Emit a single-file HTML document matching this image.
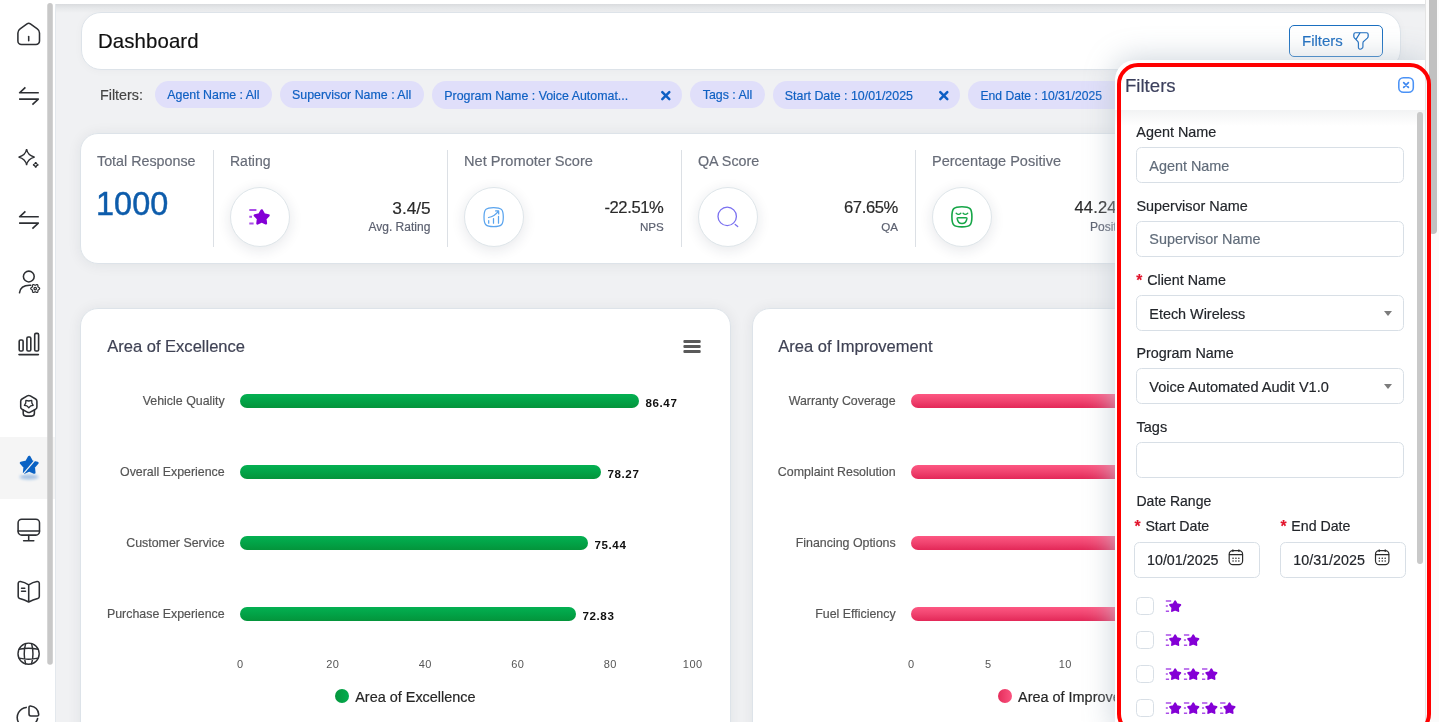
<!DOCTYPE html>
<html>
<head>
<meta charset="utf-8">
<title>Dashboard</title>
<style>
*{box-sizing:border-box;margin:0;padding:0}
html,body{width:1439px;height:722px;overflow:hidden;background:#fff;font-family:"Liberation Sans",sans-serif;}
body{position:relative}
.abs{position:absolute}
.t{position:absolute;white-space:nowrap}
.t,.ct,.st,.val,.sub,.cat,.lg,.lb,.it,h2{-webkit-text-stroke:.18px currentColor}
#side{position:absolute;left:0;top:0;width:56px;height:722px;background:#fff}
#side .active{position:absolute;left:0;top:437px;width:56px;height:62px;background:#f5f5f5}
#side .edge{position:absolute;left:55px;top:4px;width:1px;height:718px;background:#e3e8ed}
#sicons{position:absolute;left:0;top:0;width:56px;height:722px;fill:none;stroke:#2d2f33;stroke-width:1.55;stroke-linecap:round;stroke-linejoin:round}
#main{position:absolute;left:56px;top:4px;width:1369px;height:718px;background:#f0f1f3;overflow:hidden}
#main .topshadow{position:absolute;left:0;top:0;width:100%;height:9px;background:linear-gradient(#d9dbde,#e6e8ea 45%,#f0f1f3)}
.card{position:absolute;background:#fff;border:1px solid #dde3e9;border-radius:18px;box-shadow:0 1px 14px rgba(25,35,50,.075)}
#pg{transform:translateZ(0);position:absolute;left:-56px;top:-4px;width:1439px;height:722px}
#hdr{left:81px;top:12px;width:1319.5px;height:58px;border-radius:20px;box-shadow:0 1px 8px rgba(25,35,50,.03)}
#fbtn{position:absolute;left:1289px;top:25px;width:94px;height:32px;border:1.2px solid #1a6fc0;border-radius:5px;background:#fff}
.c20{line-height:20px}
.chip{position:absolute;top:81px;height:27px;border-radius:14px;background:#e0dffa}
.chip.x{height:28px}
.ct{position:absolute;white-space:nowrap;top:84.5px;line-height:20px;font-size:12.4px;color:#0f60c3}
#stats{left:80px;top:133px;width:1330px;height:131px}
.st{position:absolute;white-space:nowrap;top:150.8px;line-height:20px;font-size:14.3px;color:#676c78}
.div{position:absolute;top:150px;width:1px;height:97px;background:#dce0e5}
.circ{position:absolute;top:187px;width:60px;height:60px;border-radius:50%;border:1px solid #dfe6ea;background:#fff;box-shadow:0 3px 14px rgba(30,40,60,.11)}
.val{position:absolute;white-space:nowrap;top:198.1px;line-height:20px;font-size:16.6px;color:#2a2a2a;letter-spacing:-.4px}
.sub{position:absolute;white-space:nowrap;top:217px;line-height:20px;font-size:12px;color:#5c6170}
.chart h2{position:absolute;left:26.2px;top:27px;font-size:16.55px;font-weight:400;line-height:22px;color:#3f4254;white-space:nowrap}
.cat{position:absolute;white-space:nowrap;line-height:20px;font-size:12.4px;color:#555}
.bar{position:absolute;height:14px;border-radius:7px}
.g{background:linear-gradient(#04b052,#02a347 50%,#04943b)}
.p{background:linear-gradient(#fd5782,#f0436f 50%,#e32858)}
.dl{position:absolute;white-space:nowrap;font-size:11.6px;letter-spacing:.58px;margin-top:.7px;line-height:20px;font-weight:700;color:#111}
.ax{position:absolute;top:654px;font-size:11px;line-height:20px;color:#555;width:40px;margin-left:-20px;text-align:center;letter-spacing:.5px;text-indent:.5px}
.lg{position:absolute;white-space:nowrap;top:687.3px;font-size:14.45px;line-height:20px;color:#262626}
.lgd{position:absolute;top:689px;width:14px;height:14px;border-radius:50%}
#panel{position:absolute;left:1115px;top:60px;width:310px;height:670px;background:#fff;border-top-left-radius:20px;box-shadow:0 0 30px 1px rgba(190,200,210,.8)}
#ppg{transform:translateZ(0);position:absolute;left:-1115px;top:-60px;width:1439px;height:722px}
#pbody{position:absolute;left:1115px;top:110px;width:310px;height:620px;background:linear-gradient(#f2f3f4,#fff 16px)}
.lb{position:absolute;white-space:nowrap;line-height:20px;font-size:14.2px;color:#23262b}
.lb i{position:absolute;left:-10.9px;top:.5px;color:#e2132b;font-style:normal;font-weight:700;font-size:15.6px;line-height:20px}
.inp{position:absolute;left:1136px;width:268px;height:36px;border:1px solid #d8dfe6;border-radius:5.5px;background:#fff}
.it{position:absolute;white-space:nowrap;line-height:20px;font-size:14.4px;color:#23262b}
.ph{color:#616c7a}
.cb{position:absolute;left:1136px;width:18px;height:18px;border:1px solid #d8dfe6;border-radius:4.5px;background:#fff}
.arr{position:absolute;left:1384px;width:0;height:0;border-left:4px solid transparent;border-right:4px solid transparent;border-top:5px solid #7c7c7c}
#pthumb{position:absolute;left:1417px;top:112px;width:6px;height:452px;background:#c9c9c9;border-radius:3px}
#red{position:absolute;left:1117px;top:63px;width:314.3px;height:671.5px;border:4px solid #ff0000;border-radius:21px}
#vsb{position:absolute;left:1425px;top:0;width:14px;height:722px;background:#fbfbfb;border-left:1px solid #e4e4e4}
#vsb div{position:absolute;left:3px;top:-6px;width:8px;height:240px;background:#c1c1c1;border-radius:4px}
</style>
</head>
<body>
<div id="side">
  <div class="active"></div>
  <div class="edge"></div>
  <svg id="sicons" viewBox="0 0 56 722">
    <rect x="47.25" y="3" width="5.55" height="661.7" rx="2.77" fill="#c8c8c8" stroke="none"/>
        <path d="M17.9 33V41a3.5 3.5 0 0 0 3.5 3.5H36a3.5 3.5 0 0 0 3.5-3.5V33Q39.5 30.3 37.3 28.8L30.4 23.9Q28.7 22.7 27 23.9L20.1 28.8Q17.9 30.3 17.9 33Z"/>
    <path d="M28.7 36.6V40.8"/>
        <g stroke-linecap="butt" stroke-width="1.6"><path d="M38.8 92.8H19.6L25.4 87.3"/><path d="M19.1 99.1H38.3L32.4 104.6"/></g>
        <g stroke-width="1.35" stroke-linejoin="miter"><path d="M26.6 149.2Q27.6 155.4 34.6 157.2Q27.6 159 26.6 165.2Q25.6 159 18.6 157.2Q25.6 155.4 26.6 149.2Z"/>
    <path d="M35.7 162.2Q36.1 164.5 38.4 164.9Q36.1 165.3 35.7 167.6Q35.300 165.300 33 164.900Q35.300 164.500 35.700 162.200Z"/></g>
        <g stroke-linecap="butt" stroke-width="1.6"><path d="M38.8 216.8H19.6L25.4 211.3"/><path d="M19.1 223.1H38.3L32.4 228.6"/></g>
        <circle cx="28.8" cy="276.5" r="5.4"/>
    <path d="M19.5 292.8C20.2 287.5 24.5 285 30.8 285.3"/>
    <g stroke-width="1.25"><path fill="#fff" d="M39.65 288.50L39.55 288.88L39.29 289.22L38.92 289.50L38.54 289.71L38.22 289.91L38.01 290.12L37.93 290.41L37.92 290.78L37.92 291.22L37.87 291.68L37.71 292.08L37.43 292.35L37.05 292.46L36.62 292.40L36.20 292.22L35.82 292.00L35.49 291.82L35.20 291.75L34.91 291.82L34.58 292.00L34.20 292.22L33.78 292.40L33.35 292.46L32.98 292.35L32.69 292.08L32.53 291.68L32.48 291.22L32.48 290.78L32.47 290.41L32.39 290.12L32.18 289.91L31.86 289.71L31.48 289.50L31.11 289.22L30.85 288.88L30.75 288.50L30.85 288.12L31.11 287.78L31.48 287.50L31.86 287.29L32.18 287.09L32.39 286.88L32.47 286.59L32.48 286.22L32.48 285.78L32.53 285.32L32.69 284.92L32.98 284.65L33.35 284.54L33.78 284.60L34.20 284.78L34.58 285.00L34.91 285.18L35.20 285.25L35.49 285.18L35.82 285.00L36.20 284.78L36.62 284.60L37.05 284.54L37.42 284.65L37.71 284.92L37.87 285.32L37.92 285.78L37.92 286.22L37.93 286.59L38.01 286.88L38.22 287.09L38.54 287.29L38.92 287.50L39.29 287.78L39.55 288.12Z"/><circle cx="35.2" cy="288.5" r="1.25"/></g>
        <g stroke-width="1.6"><rect x="19.2" y="340" width="3.9" height="11" rx="1.3"/><rect x="26.9" y="337" width="3.9" height="14" rx="1.3"/><rect x="34.7" y="333.4" width="3.9" height="17.6" rx="1.3"/><path d="M19 354.6H38.4"/></g>
        <path d="M27.3 395.9Q28.8 395 30.3 395.9L35.6 399Q36.9 399.8 36.9 401.3V406.9Q36.9 408.4 35.6 409.2L30.3 412.1Q28.8 413 27.3 412.1L22 409.2Q20.7 408.4 20.7 406.9V401.3Q20.7 399.8 22 399Z"/>
    <path d="M23.2 410.2V413.3Q23.2 416.1 26 416.1H31.6Q34.4 416.1 34.4 413.3V410.2"/>
    <path d="M25.9 400.4L28.8 401L31.7 400.4L31.9 403.2L33.2 405.3L30.7 405.9L28.8 407.8L26.9 405.9L24.4 405.3L25.7 403.2Z" stroke-width="1.3"/>
        <rect x="18.1" y="519.2" width="21.4" height="15.9" rx="3.6"/><path d="M18.1 530.9H39.5M28.7 535.5V540.7M23.6 540.7H33.8"/>
        <path d="M28.7 584.9Q24.5 582.2 20.4 581.6Q18.2 581.4 18.2 583.6V596.5Q18.2 598 19.7 598.5Q24.5 599.8 28.7 602Q32.9 599.8 37.7 598.5Q39.3 598 39.3 596.5V583.6Q39.3 581.4 37 581.6Q32.9 582.2 28.7 584.9ZM28.7 585V601.8"/>
    <path d="M21.5 588.2H24.8M21.5 591.3H25.6" stroke-width="1.4"/>
        <g stroke-width="1.45"><circle cx="28.6" cy="653.7" r="10.6"/><path d="M25.6 643.6Q22.9 653.7 25.6 663.8M31.6 643.6Q34.3 653.7 31.6 663.8M19.2 649.3Q28.6 647.2 38 649.3M19.2 658.1Q28.6 660.2 38 658.1"/></g>
        <path d="M26.2 707.4A10.2 10.2 0 0 0 18.3 722M37.6 718.5Q37.2 720.5 36 722"/>
    <path d="M29 707.5Q29 706 30.5 706.1Q37.8 707 38.7 714.3Q38.8 715.9 37.3 715.9H30.8Q29 715.9 29 714.1Z"/>
        <g stroke="none"><ellipse cx="29" cy="477" rx="9.5" ry="2.6" fill="#0a62c4" opacity=".35" filter="url(#bl)"/>
    <path fill="#0a62c4" stroke="#0a62c4" stroke-width="2.6" d="M29.20 457.00L31.96 461.80L37.38 462.94L33.67 467.05L34.25 472.56L29.20 470.30L24.15 472.56L24.73 467.05L21.02 462.94L26.44 461.80Z"/>
    <path d="M22.6 474.6L34.6 460.6" stroke="#f5f5f5" stroke-width="1.2" stroke-linecap="butt"/></g>
    <defs><filter id="bl" x="-50%" y="-200%" width="200%" height="500%"><feGaussianBlur stdDeviation="1.6"/></filter></defs>
  </svg>
</div>
<div id="main">
 <div class="topshadow"></div>
 <div id="pg">
  <div class="card" id="hdr"></div>
  <div class="t c20" style="left:98px;top:30.8px;font-size:20.4px;color:#111;letter-spacing:.1px">Dashboard</div>
  <div id="fbtn"></div>
  <div class="t c20" style="left:1302px;top:30.5px;font-size:15px;color:#1a6bbf">Filters</div>
  <svg class="abs" style="left:1350.9px;top:31.1px" width="20" height="20" viewBox="0 0 24 24" fill="none" stroke="#1a6bbf" stroke-width="1.45" stroke-linecap="round" stroke-linejoin="round"><path d="M5.4 2.1h13.2c1.1 0 2 .9 2 2v2.2c0 .8-.5 1.8-1 2.300l-4.300 3.800c-.6.500-1 1.500-1 2.300V19c0 .6-.4 1.400-.9 1.700l-1.400.9c-1.300.8-3.100-.1-3.100-1.700v-5.300c0-.7-.4-1.600-.8-2.100l-3.800-4c-.5-.5-.9-1.400-.9-2V4.200c0-1.200.9-2.100 2-2.100zM10.930 2.100L6 10"/></svg>

  <div class="t c20" style="left:100px;top:85px;font-size:14.3px;color:#444">Filters:</div>
  <div class="chip" style="left:155px;width:117px"></div><div class="ct" style="left:167.3px">Agent Name : All</div>
  <div class="chip" style="left:280px;width:144px"></div><div class="ct" style="left:292px">Supervisor Name : All</div>
  <div class="chip x" style="left:432px;width:250px"></div><div class="ct" style="left:444.3px;top:85.6px">Program Name : Voice Automat...</div>
  <div class="chip" style="left:690px;width:75px"></div><div class="ct" style="left:702.7px">Tags : All</div>
  <div class="chip x" style="left:773px;width:187px"></div><div class="ct" style="left:784.8px;top:85.6px">Start Date : 10/01/2025</div>
  <div class="chip x" style="left:968px;width:186px"></div><div class="ct" style="left:980.5px;top:85.6px;font-size:12.15px">End Date : 10/31/2025</div>
  <svg class="abs" style="left:659px;top:89px" width="14" height="14" viewBox="0 0 14 14" fill="none" stroke="#0d5fc4" stroke-width="2.5" stroke-linecap="round"><path d="M3.3 3.1L10.3 10.1M10.3 3.1L3.3 10.1"/></svg>
  <svg class="abs" style="left:936.5px;top:89px" width="14" height="14" viewBox="0 0 14 14" fill="none" stroke="#0d5fc4" stroke-width="2.5" stroke-linecap="round"><path d="M3.3 3.1L10.3 10.1M10.3 3.1L3.3 10.1"/></svg>

  <div class="card" id="stats"></div>
  <div class="st" style="left:97px">Total Response</div>
  <div class="t" style="left:96px;top:183.9px;line-height:40px;font-size:32.4px;color:#0d5cab;letter-spacing:.1px;-webkit-text-stroke:.45px #0d5cab">1000</div>
  <div class="div" style="left:213px"></div><div class="div" style="left:447px"></div><div class="div" style="left:681px"></div><div class="div" style="left:915px"></div>
  <div class="st" style="left:230px;font-size:14px">Rating</div>
  <div class="st" style="left:464px;font-size:14.6px">Net Promoter Score</div>
  <div class="st" style="left:698px">QA Score</div>
  <div class="st" style="left:932px;font-size:14.5px">Percentage Positive</div>
  <div class="circ" style="left:230px"></div><div class="circ" style="left:464px"></div><div class="circ" style="left:698px"></div><div class="circ" style="left:932px"></div>
  <div class="val" style="right:1008.3px;top:197.6px;font-size:17.3px;letter-spacing:0">3.4/5</div><div class="sub" style="right:1008.7px">Avg. Rating</div>
  <div class="val" style="right:775.6px">-22.51%</div><div class="sub" style="right:775.2px;font-size:11.6px">NPS</div>
  <div class="val" style="right:541.1px">67.65%</div><div class="sub" style="right:541px;font-size:11.6px">QA</div>
  <div class="val" style="right:307.5px;letter-spacing:.12px">44.24%</div><div class="sub" style="right:307px">Positive</div>
    <svg class="abs" style="left:0;top:0" width="1439" height="722" viewBox="0 0 1439 722" fill="none" stroke-linecap="round" stroke-linejoin="round">
    <defs>
      <symbol id="sstar" viewBox="0 0 21 17" overflow="visible">
        <path d="M0.3 1.2H7.4M0.3 8H3M0.3 14.8H4.6" stroke="#ab4fe8" stroke-width="2" stroke-linecap="butt"/>
        <path d="M12.70 1.60L14.99 5.64L19.55 6.58L16.41 10.01L16.93 14.62L12.70 12.70L8.47 14.62L8.99 10.01L5.85 6.58L10.41 5.64Z" fill="#8400d6" stroke="#8400d6" stroke-width="2.4" stroke-linejoin="round"/>
      </symbol>
    </defs>
    <use href="#sstar" x="249" y="208.8" width="21" height="17"/>
        <g stroke="#5aa4ee" stroke-width="1.25">
      <path d="M493.6 207.5C501.5 207.5 503.3 209.3 503.3 217C503.3 224.8 501.5 226.6 493.6 226.6C485.8 226.6 484 224.8 484 217C484 209.3 485.8 207.5 493.6 207.5Z"/>
      <path d="M488.7 220.5V223.2M493.5 218.5V223.2M498.5 216.4V223.2"/>
      <path d="M488.5 217.5Q494.5 216.3 498.3 211.3M495.6 210.9L498.6 210.9L498.7 213.9"/>
    </g>
        <g stroke="#7a70f0" stroke-width="1.3"><circle cx="727.2" cy="216.4" r="9.2"/><path d="M735.2 224.4L737.7 226.5"/></g>
        <g stroke="#17a648" stroke-width="1.6">
      <path d="M961.9 206.7C970.2 206.7 971.9 208.4 971.9 216.8C971.9 225.2 970.2 226.9 961.9 226.9C953.6 226.9 951.9 225.2 951.9 216.8C951.9 208.4 953.6 206.7 961.9 206.7Z"/>
      <path d="M956.2 213.2Q958.5 215.6 960.8 213.2M963.1 213.2Q965.4 215.6 967.7 213.2" stroke-width="1.4"/>
      <path d="M958 217.8H966.1Q967 217.8 966.9 218.7Q966.2 223.6 962 223.6Q957.9 223.6 957.2 218.7Q957.1 217.8 958 217.8Z" stroke-width="1.5"/>
    </g>
  </svg>


  <div class="card chart" style="left:80px;top:308px;width:651px;height:440px">
    <h2>Area of Excellence</h2>
  </div>
  <div class="cat" style="right:1214.3px;top:390.7px">Vehicle Quality</div>
  <div class="cat" style="right:1214.3px;top:461.7px">Overall Experience</div>
  <div class="cat" style="right:1214.3px;top:532.7px">Customer Service</div>
  <div class="cat" style="right:1214.3px;top:603.7px">Purchase Experience</div>
  <div class="bar g" style="left:240px;top:394px;width:398.5px"></div>
  <div class="bar g" style="left:240px;top:465px;width:360.5px"></div>
  <div class="bar g" style="left:240px;top:536px;width:347.5px"></div>
  <div class="bar g" style="left:240px;top:607px;width:335.5px"></div>
  <div class="dl" style="left:645.5px;top:392px">86.47</div>
  <div class="dl" style="left:607.5px;top:463px">78.27</div>
  <div class="dl" style="left:594.5px;top:534px">75.44</div>
  <div class="dl" style="left:582.5px;top:605px">72.83</div>
  <div class="ax" style="left:240px">0</div><div class="ax" style="left:332.5px">20</div><div class="ax" style="left:425px">40</div><div class="ax" style="left:517.5px">60</div><div class="ax" style="left:610px">80</div><div class="ax" style="left:692.5px">100</div>
  <div class="lgd" style="left:335.3px;background:linear-gradient(90deg,#05953c,#03ad4f)"></div><div class="lg" style="left:355.2px">Area of Excellence</div>
  <svg class="abs" style="left:683px;top:339px" width="19" height="16" viewBox="0 0 19 16" fill="#5a5a5a"><rect x=".4" y="1" width="17.3" height="3" rx="1.1"/><rect x=".4" y="6" width="17.3" height="3" rx="1.1"/><rect x=".4" y="11" width="17.3" height="3" rx="1.1"/></svg>

  <div class="card chart" style="left:751.5px;top:308px;width:651px;height:440px">
    <h2 style="left:25.7px">Area of Improvement</h2>
  </div>
  <div class="cat" style="right:543.4px;top:390.7px">Warranty Coverage</div>
  <div class="cat" style="right:543.4px;top:461.7px">Complaint Resolution</div>
  <div class="cat" style="right:543.4px;top:532.7px">Financing Options</div>
  <div class="cat" style="right:543.4px;top:603.7px">Fuel Efficiency</div>
  <div class="bar p" style="left:910.5px;top:394px;width:330px"></div>
  <div class="bar p" style="left:910.5px;top:465px;width:300px"></div>
  <div class="bar p" style="left:910.5px;top:536px;width:280px"></div>
  <div class="bar p" style="left:910.5px;top:607px;width:260px"></div>
  <div class="ax" style="left:911px">0</div><div class="ax" style="left:988px">5</div><div class="ax" style="left:1065px">10</div>
  <div class="lgd" style="left:997.5px;background:linear-gradient(90deg,#e52d5b,#fb5480)"></div><div class="lg" style="left:1018px">Area of Improvement</div>
 </div>
</div>
<div id="panel"><div id="ppg">
  <div class="t" style="left:1125px;top:73.5px;line-height:24px;font-size:18.6px;color:#3b3f5c">Filters</div>
  <svg class="abs" style="left:1396px;top:75px" width="20" height="20" viewBox="0 0 20 20" fill="none" stroke-linecap="round"><rect x="2.8" y="2.8" width="14.5" height="14.5" rx="4.6" stroke="#4a92f6" stroke-width="1.55"/><path d="M7.7 7.7L12.400 12.400M12.400 7.700L7.700 12.400" stroke="#3f88f0" stroke-width="1.7"/></svg>
  <div id="pbody"></div>
  <div class="lb" style="left:1136.3px;top:122.2px;font-size:14.4px">Agent Name</div>
  <div class="inp" style="top:147px"></div><div class="it ph" style="left:1149.3px;top:155.7px">Agent Name</div>
  <div class="lb" style="left:1136.5px;top:195.9px;font-size:14.4px">Supervisor Name</div>
  <div class="inp" style="top:221px"></div><div class="it ph" style="left:1149.3px;top:228.9px">Supervisor Name</div>
  <div class="lb" style="left:1147.2px;top:270.3px;font-size:14.3px"><i>*</i>Client Name</div>
  <div class="inp" style="top:295px"></div><div class="it" style="left:1149.3px;top:304px">Etech Wireless</div><div class="arr" style="top:311px"></div>
  <div class="lb" style="left:1136.5px;top:343.2px;font-size:14.35px">Program Name</div>
  <div class="inp" style="top:368px"></div><div class="it" style="left:1149.3px;top:376.9px;font-size:14.55px">Voice Automated Audit V1.0</div><div class="arr" style="top:384.3px"></div>
  <div class="lb" style="left:1136.5px;top:417px;font-size:14.5px">Tags</div>
  <div class="inp" style="top:442px"></div>
  <div class="lb" style="left:1136.5px;top:491px;font-size:14px">Date Range</div>
  <div class="lb" style="left:1145.4px;top:516px;font-size:14.2px"><i>*</i>Start Date</div>
  <div class="lb" style="left:1291.3px;top:516px;font-size:14.2px"><i>*</i>End Date</div>
  <div class="inp" style="top:542px;left:1134px;width:126px"></div><div class="it" style="left:1147px;top:549.7px;font-size:14.3px">10/01/2025</div>
  <div class="inp" style="top:542px;left:1280px;width:126px"></div><div class="it" style="left:1293.3px;top:549.7px;font-size:14.3px">10/31/2025</div>
  <svg class="abs" style="left:0;top:0" width="1439" height="722" viewBox="0 0 1439 722" fill="none" stroke="#2b2b2b" stroke-width="1.2" stroke-linecap="round"><defs><symbol id="cal" viewBox="0 0 16 17" overflow="visible"><rect x="1.2" y="1.7" width="13.4" height="14" rx="3.6"/><path d="M1.400 5.600H14.400M4.900 0.800V2.500M10.900 0.800V2.500"/><path d="M5 9.300H5.100M7.900 9.300H8M10.800 9.300H10.900M5 11.900H5.100M7.900 11.900H8M10.800 11.900H10.900" stroke-width="1.5"/></symbol></defs><use href="#cal" x="1228" y="549" width="16" height="17"/><use href="#cal" x="1374.3" y="549" width="16" height="17"/></svg>
  <div class="cb" style="top:597px"></div><div class="cb" style="top:631px"></div><div class="cb" style="top:665px"></div><div class="cb" style="top:699px"></div>
  <svg class="abs" style="left:0;top:0" width="1439" height="722" viewBox="0 0 1439 722"><use href="#sstar" x="1165.6" y="600.0" width="15.8" height="12.8"/><use href="#sstar" x="1165.6" y="634.0" width="15.8" height="12.8"/><use href="#sstar" x="1183.7" y="634.0" width="15.8" height="12.8"/><use href="#sstar" x="1165.6" y="668.0" width="15.8" height="12.8"/><use href="#sstar" x="1183.7" y="668.0" width="15.8" height="12.8"/><use href="#sstar" x="1201.8" y="668.0" width="15.8" height="12.8"/><use href="#sstar" x="1165.6" y="702.0" width="15.8" height="12.8"/><use href="#sstar" x="1183.7" y="702.0" width="15.8" height="12.8"/><use href="#sstar" x="1201.8" y="702.0" width="15.8" height="12.8"/><use href="#sstar" x="1219.9" y="702.0" width="15.8" height="12.8"/></svg>
  <div id="pthumb"></div>
</div></div>
<div id="vsb"><div></div></div>
<div id="red"></div>
</body>
</html>
